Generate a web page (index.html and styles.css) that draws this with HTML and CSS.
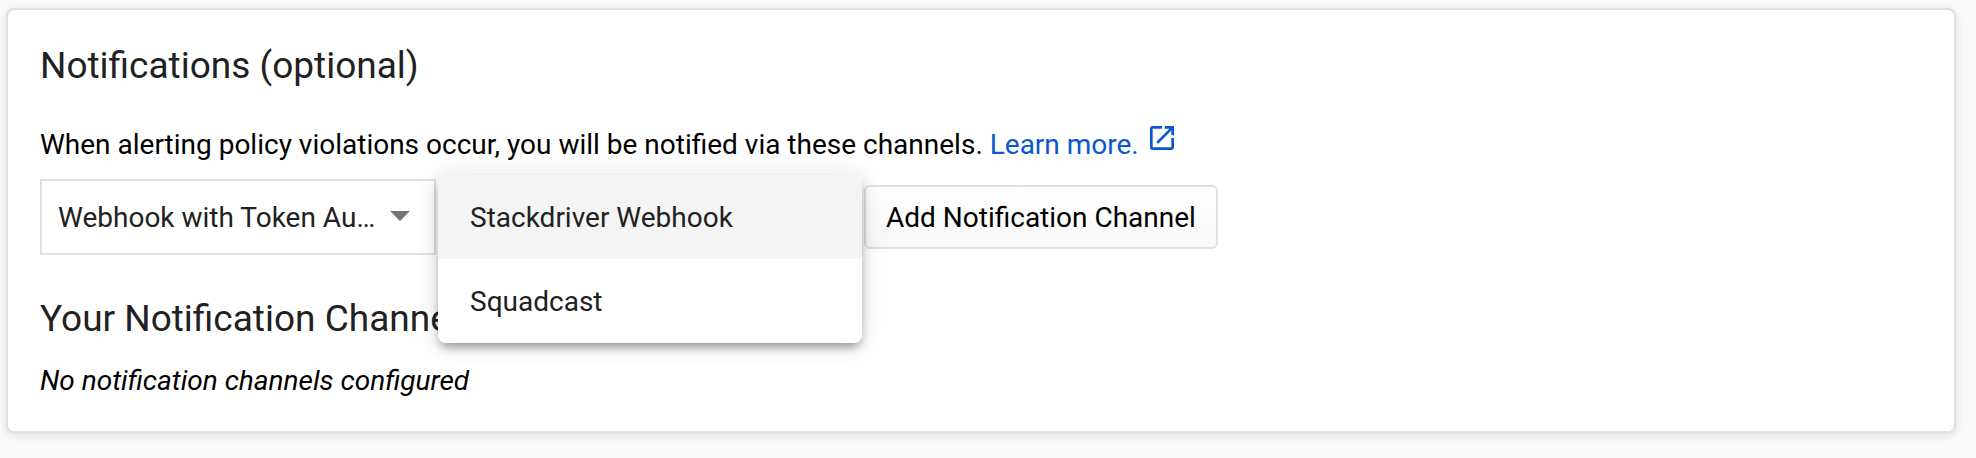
FILE: index.html
```html
<!DOCTYPE html>
<html lang="en">
<head>
    <meta charset="UTF-8">
    <meta name="viewport" content="width=device-width, initial-scale=1.0">
    <title>Notifications</title>
    <link rel="stylesheet" href="styles.css">
</head>
<body>
    <main class="card">
        <h2 class="title">Notifications (optional)</h2>
        <p class="description">
            When alerting policy violations occur, you will be notified via these channels.
            <a href="#" class="learn-more">Learn more.
                <svg class="external-icon" viewBox="0 0 24 24" aria-hidden="true">
                    <path d="M19 19H5V5h7V3H5a2 2 0 0 0-2 2v14a2 2 0 0 0 2 2h14c1.100 0 2-.9 2-2v-7h-2v7zM14 3v2h3.590l-9.830 9.830 1.410 1.410L19 6.410V10h2V3h-7z"/>
                </svg>
            </a>
        </p>
        <div class="channel-row">
            <div class="channel-type">
                <select aria-label="Channel type">
                    <option>Webhook with Token Authentication</option>
                </select>
            </div>
            <div class="channel-picker">
                <div class="menu" role="listbox" aria-label="Channel">
                    <button type="button" class="menu-item active" role="option" aria-selected="true">Stackdriver Webhook</button>
                    <button type="button" class="menu-item" role="option" aria-selected="false">Squadcast</button>
                </div>
            </div>
            <button type="button" class="add-button">Add Notification Channel</button>
        </div>
        <h2 class="title channels-title">Your Notification Channels</h2>
        <p class="empty">No notification channels configured</p>
    </main>
</body>
</html>
```

FILE: styles.css
```css
* {
    box-sizing: border-box;
}

body {
    margin: 0;
    padding: 8px 20px 20px 6px;
    background: #fafafa;
    color: #000;
    font-family: Roboto, sans-serif;
    font-size: 28px;
    line-height: 36px;
}

.card {
    padding: 32px;
    background: #fff;
    border: 2px solid #e0e0e0;
    border-radius: 8px;
    box-shadow: 0 2px 8px rgba(0, 0, 0, 0.12);
}

.title {
    margin: 0;
    color: #212121;
    font-size: 37px;
    font-weight: 400;
    line-height: 48px;
}

.description {
    margin: 32px 0 16px;
}

.learn-more {
    color: #0b57d0;
    text-decoration: none;
}

.external-icon {
    width: 32px;
    height: 32px;
    fill: currentColor;
}

.channel-row {
    display: flex;
    align-items: center;
}

.channel-type {
    position: relative;
    width: 396px;
    height: 76px;
}

.channel-type select {
    width: 100%;
    height: 100%;
    padding: 2px 56px 0 16px;
    appearance: none;
    background: #fff;
    border: 2px solid #e0e0e0;
    border-radius: 0;
    color: #212121;
    font: inherit;
    text-overflow: ellipsis;
}

/* dropdown arrow */
.channel-type::after {
    content: "";
    position: absolute;
    top: 32px;
    right: 26px;
    border: 10px solid transparent;
    border-top-color: #757575;
    border-bottom: none;
    pointer-events: none;
}

.channel-picker {
    position: relative;
    z-index: 1;
    width: 428px;
    height: 76px;
}

.menu {
    position: absolute;
    top: -4px;
    left: 2px;
    width: 424px;
    background: #fff;
    border-radius: 8px;
    box-shadow: 0 6px 10px -2px rgba(0, 0, 0, 0.36), 0 2px 24px rgba(0, 0, 0, 0.14);
    overflow: hidden;
}

.menu-item {
    display: block;
    width: 100%;
    height: 84px;
    padding: 2px 32px 0;
    background: #fff;
    border: none;
    color: #212121;
    font: inherit;
    text-align: left;
}

.menu-item.active {
    background: #f4f4f4;
}

.add-button {
    height: 64px;
    padding: 2px 20px 0;
    background: linear-gradient(#fff, #f8f8f8);
    border: 2px solid #e0e0e0;
    border-radius: 6px;
    color: #000;
    font: inherit;
}

.channels-title {
    margin-top: 40px;
}

.empty {
    margin: 20px 0 0;
    font-style: italic;
}
```
